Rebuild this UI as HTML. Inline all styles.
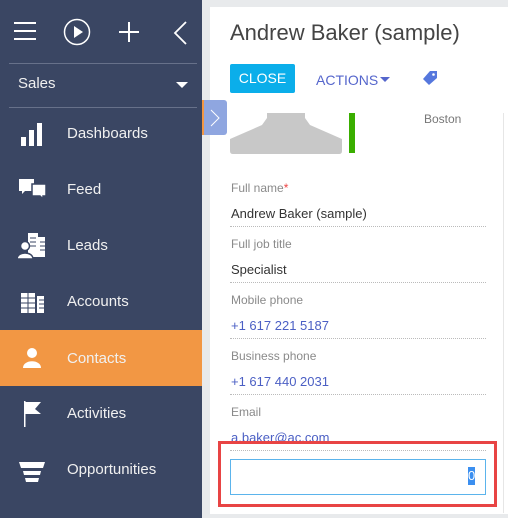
<!DOCTYPE html>
<html><head><style>
*{margin:0;padding:0;box-sizing:border-box}
body{width:508px;height:518px;overflow:hidden;background:#e8eaec;font-family:"Liberation Sans",sans-serif;position:relative}
.sb{position:absolute;left:0;top:0;width:202px;height:518px;background:#3a4663;color:#fff}
.hr{position:absolute;left:9px;width:188px;height:1px;background:#67718a}
.item{position:absolute;left:0;width:202px;height:56px}
.item span{position:absolute;left:67px;top:20px;font-size:15px;color:#f0f0f0}
.ic{position:absolute;left:18px;top:14px}
.panel{position:absolute;left:210px;top:7px;width:298px;height:507px;background:#fff}
.a{position:absolute}
.lbl{position:absolute;left:231px;font-size:12px;color:#8a8a8a}
.val{position:absolute;left:231px;font-size:13px;color:#333}
.blue{color:#4b5fc4}
.dot{position:absolute;left:230px;width:256px;border-top:1px dotted #bbb}
</style></head><body>
<div class="sb">
 <svg class="a" style="left:13px;top:20px" width="24" height="22"><g stroke="#fff" stroke-width="2"><line x1="1" y1="3" x2="23" y2="3"/><line x1="1" y1="11" x2="23" y2="11"/><line x1="1" y1="19" x2="23" y2="19"/></g></svg>
 <svg class="a" style="left:63px;top:18px" width="28" height="28"><circle cx="14" cy="14" r="12.5" stroke="#fff" stroke-width="1.5" fill="none"/><path d="M11 8 L20 14 L11 20Z" fill="#fff"/></svg>
 <svg class="a" style="left:118px;top:21px" width="22" height="22"><g stroke="#fff" stroke-width="2"><line x1="11" y1="1" x2="11" y2="21"/><line x1="1" y1="11" x2="21" y2="11"/></g></svg>
 <svg class="a" style="left:172px;top:20px" width="16" height="26"><path d="M14 2 L3 13 L14 24" stroke="#fff" stroke-width="1.8" fill="none"/></svg>
 <div class="hr" style="top:63px"></div>
 <div class="a" style="left:18px;top:75px;font-size:15px;color:#f0f0f0">Sales</div>
 <svg class="a" style="left:176px;top:82px" width="12" height="7"><path d="M0 0H12L6 6Z" fill="#fff"/></svg>
 <div class="hr" style="top:107px"></div>
 <div class="item" style="top:105px"><svg class="ic" width="26" height="28"><g fill="#fff"><rect x="3" y="18" width="5" height="9"/><rect x="11" y="11" width="5" height="16"/><rect x="19" y="4" width="5" height="23"/></g></svg><span>Dashboards</span></div>
 <div class="item" style="top:161px"><svg class="ic" width="30" height="28"><g fill="#fff"><path d="M1 4H16V16H7L4 19V16H1Z"/><path d="M14 9H28V21H25V24L22 21H14Z" stroke="#3a4663" stroke-width="1.5"/></g></svg><span>Feed</span></div>
 <div class="item" style="top:217px"><svg class="ic" width="30" height="28"><g fill="#fff"><rect x="10" y="2" width="10" height="24"/><rect x="20" y="6" width="7" height="20"/></g><g stroke="#3a4663" stroke-width="1"><line x1="12" y1="7" x2="18" y2="7"/><line x1="12" y1="11" x2="18" y2="11"/><line x1="12" y1="15" x2="18" y2="15"/><line x1="22" y1="11" x2="27" y2="11"/><line x1="22" y1="15" x2="27" y2="15"/><line x1="22" y1="19" x2="27" y2="19"/></g><circle cx="7" cy="15" r="4.5" fill="#fff" stroke="#3a4663" stroke-width="1.5"/><path d="M-1 28C-1 20 15 20 15 28Z" fill="#fff" stroke="#3a4663" stroke-width="1.5"/></svg><span>Leads</span></div>
 <div class="item" style="top:273px"><svg class="ic" width="30" height="28"><g fill="#fff"><rect x="3" y="6" width="14" height="20"/><rect x="19" y="9" width="7" height="17"/></g><g stroke="#3a4663" stroke-width="1"><line x1="3" y1="11" x2="17" y2="11"/><line x1="3" y1="16" x2="17" y2="16"/><line x1="3" y1="21" x2="17" y2="21"/><line x1="10" y1="6" x2="10" y2="26"/><line x1="21" y1="13" x2="26" y2="13"/><line x1="21" y1="17" x2="26" y2="17"/><line x1="21" y1="21" x2="26" y2="21"/></g></svg><span>Accounts</span></div>
 <div class="item" style="top:330px;background:#f29744"><svg class="ic" width="30" height="28"><g fill="#fff"><circle cx="14" cy="9" r="5"/><path d="M5 24C5 15 23 15 23 24Z"/></g></svg><span>Contacts</span></div>
 <div class="item" style="top:385px"><svg class="ic" width="30" height="30"><rect x="6" y="2" width="1.5" height="26" fill="#fff"/><path d="M7 3H23L17 10L23 15H7Z" fill="#fff"/></svg><span>Activities</span></div>
 <div class="item" style="top:441px"><svg class="ic" width="30" height="28"><g fill="#fff"><path d="M1 7H27L25 13H3Z"/><path d="M5 16H23L22 20H6Z"/><path d="M7 23H21L20 27H8Z"/></g></svg><span>Opportunities</span></div>
</div>
<div class="panel"></div>
<div class="a" style="left:503px;top:113px;width:1px;height:400px;background:#e6e6e6"></div>
<div class="a" style="left:230px;top:20px;font-size:22px;color:#444">Andrew Baker (sample)</div>
<div class="a" style="left:230px;top:64px;width:65px;height:29px;background:#0baeea;border-radius:2px;color:#fff;font-size:14px;line-height:29px;text-align:center">CLOSE</div>
<div class="a" style="left:316px;top:72px;font-size:14px;color:#5566cc">ACTIONS</div>
<svg class="a" style="left:380px;top:77px" width="10" height="6"><path d="M0 0H10L5 5Z" fill="#5566cc"/></svg>
<svg class="a" style="left:422px;top:70px" width="16" height="16"><path d="M8 1H15V8L7 15L1 9Z" fill="#5577dd"/><circle cx="11.5" cy="4.5" r="1.3" fill="#fff"/></svg>
<div class="a" style="left:202px;top:100px;width:25px;height:35px;background:#8fa6e0;border-left:2px solid #f29744;border-radius:0 3px 3px 0"></div>
<svg class="a" style="left:209px;top:108px" width="12" height="20"><path d="M2 2L10 10L2 18" stroke="#fff" stroke-width="1" fill="none"/></svg>
<svg class="a" style="left:230px;top:113px" width="112" height="42"><path d="M37 0H75V5L80 12L112 26V38Q112 41 109 41H3Q0 41 0 38V26L32 12L37 5Z" fill="#c8c8c8"/></svg>
<div class="a" style="left:349px;top:113px;width:6px;height:40px;background:#3aae00"></div>
<div class="a" style="left:424px;top:112px;font-size:12px;color:#777">Boston</div>
<div class="lbl" style="top:181px">Full name<span style="color:#e44">*</span></div>
<div class="val" style="top:206px">Andrew Baker (sample)</div>
<div class="dot" style="top:226px"></div>
<div class="lbl" style="top:237px">Full job title</div>
<div class="val" style="top:262px">Specialist</div>
<div class="dot" style="top:282px"></div>
<div class="lbl" style="top:293px">Mobile phone</div>
<div class="val blue" style="top:318px">+1 617 221 5187</div>
<div class="dot" style="top:338px"></div>
<div class="lbl" style="top:349px">Business phone</div>
<div class="val blue" style="top:374px">+1 617 440 2031</div>
<div class="dot" style="top:394px"></div>
<div class="lbl" style="top:405px">Email</div>
<div class="val blue" style="top:430px;height:15px;overflow:hidden">a.baker@ac.com</div>
<div class="dot" style="top:450px"></div>
<div class="a" style="left:230px;top:459px;width:256px;height:36px;border:1px solid #5bb4ec"></div>
<div class="a" style="left:468px;top:467px;width:7px;height:18px;background:#3b8ff0;color:#fff;font-size:13px;line-height:18px;text-align:center">0</div>
<div class="a" style="left:218px;top:441px;width:279px;height:66px;border:3px solid #e84444"></div>
</body></html>
